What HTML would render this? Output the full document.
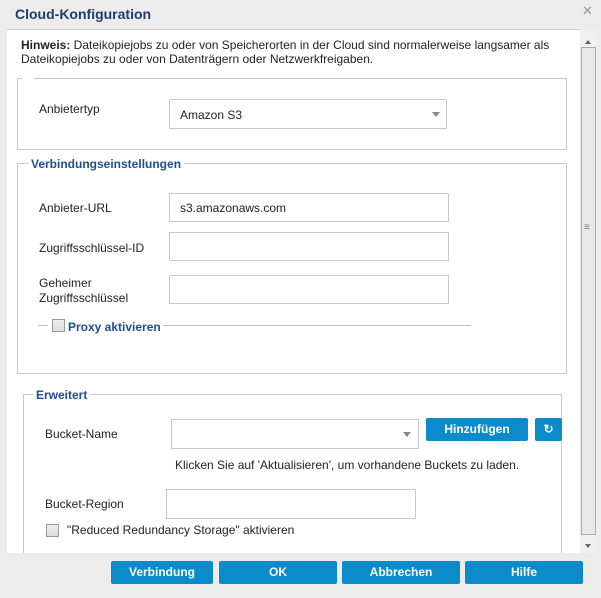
<!DOCTYPE html>
<html><head><meta charset="utf-8"><style>
*{box-sizing:border-box;margin:0;padding:0}
body{width:601px;height:598px;background:#ececec;font-family:"Liberation Sans",Arial,sans-serif;font-size:12px;color:#222;position:relative;overflow:hidden}
.a{position:absolute}
.title{left:15px;top:6px;font-size:14px;font-weight:bold;color:#1e3c6e}
.content{left:7px;top:29px;width:573px;height:524px;background:#fff;border-top:1px solid #d0d0d0}
.fs{border:1px solid #c6c8d2}
.lg{background:#fff;padding:0 3px;font-weight:bold;color:#1f4e8c}
.inp{border:1px solid #c8c8c8;background:#fff}
.btn{background:#0b8bc9;color:#fff;font-weight:bold;text-align:center;line-height:23px;height:23px;border-radius:2px}
.cb{width:13px;height:13px;border:1px solid #999;background:linear-gradient(#eee,#ddd)}
.arr{width:0;height:0;border-left:4px solid transparent;border-right:4px solid transparent;border-top:5px solid #888}
</style></head><body>
<div class="a title">Cloud-Konfiguration</div>
<div class="a" style="left:582px;top:3px;color:#999;font-size:13px">✕</div>
<div class="a content"></div>
<div class="a" style="left:21px;top:38px;line-height:14px;width:560px"><b>Hinweis:</b> Dateikopiejobs zu oder von Speicherorten in der Cloud sind normalerweise langsamer als Dateikopiejobs zu oder von Datenträgern oder Netzwerkfreigaben.</div>

<div class="a fs" style="left:17px;top:78px;width:550px;height:72px"></div>
<div class="a" style="left:22px;top:76px;width:12px;height:4px;background:#fff"></div>
<div class="a" style="left:39px;top:102px">Anbietertyp</div>
<div class="a inp" style="left:169px;top:99px;width:278px;height:30px"></div>
<div class="a" style="left:180px;top:108px">Amazon S3</div>
<div class="a arr" style="left:432px;top:112px"></div>

<div class="a fs" style="left:17px;top:163px;width:550px;height:211px"></div>
<div class="a lg" style="left:28px;top:157px">Verbindungseinstellungen</div>
<div class="a" style="left:39px;top:201px">Anbieter-URL</div>
<div class="a inp" style="left:169px;top:193px;width:280px;height:29px"></div>
<div class="a" style="left:180px;top:201px">s3.amazonaws.com</div>
<div class="a" style="left:39px;top:241px">Zugriffsschlüssel-ID</div>
<div class="a inp" style="left:169px;top:232px;width:280px;height:29px"></div>
<div class="a" style="left:39px;top:276px;line-height:15px">Geheimer<br>Zugriffsschlüssel</div>
<div class="a inp" style="left:169px;top:275px;width:280px;height:29px"></div>
<div class="a" style="left:38px;top:325px;width:433px;height:1px;background:#b8bcc8"></div>
<div class="a" style="left:48px;top:318px;width:115px;height:16px;background:#fff"></div>
<div class="a cb" style="left:52px;top:319px"></div>
<div class="a" style="left:68px;top:320px;font-weight:bold;color:#1f4e8c">Proxy aktivieren</div>

<div class="a fs" style="left:23px;top:394px;width:539px;height:170px"></div>
<div class="a lg" style="left:33px;top:388px">Erweitert</div>
<div class="a" style="left:45px;top:427px">Bucket-Name</div>
<div class="a inp" style="left:171px;top:419px;width:248px;height:30px"></div>
<div class="a arr" style="left:403px;top:432px"></div>
<div class="a btn" style="left:426px;top:418px;width:102px">Hinzufügen</div>
<div class="a btn" style="left:535px;top:418px;width:27px">↻</div>
<div class="a" style="left:175px;top:458px">Klicken Sie auf 'Aktualisieren', um vorhandene Buckets zu laden.</div>
<div class="a" style="left:45px;top:497px">Bucket-Region</div>
<div class="a inp" style="left:166px;top:489px;width:250px;height:30px"></div>
<div class="a cb" style="left:46px;top:524px"></div>
<div class="a" style="left:67px;top:523px">"Reduced Redundancy Storage" aktivieren</div>

<div class="a" style="left:0;top:553px;width:601px;height:45px;background:#ececec"></div>
<div class="a btn" style="left:111px;top:561px;width:102px">Verbindung</div>
<div class="a btn" style="left:219px;top:561px;width:118px">OK</div>
<div class="a btn" style="left:342px;top:561px;width:118px">Abbrechen</div>
<div class="a btn" style="left:465px;top:561px;width:118px">Hilfe</div>

<div class="a" style="left:580px;top:30px;width:17px;height:523px;background:#f0f0f0"></div>
<div class="a" style="left:581px;top:47px;width:15px;height:488px;background:#e8e8e8;border:1px solid #aaa"></div>
<div class="a" style="left:584px;top:222px;color:#777;font-size:10px">≡</div>
<div class="a" style="left:585px;top:40px;border-left:3px solid transparent;border-right:3px solid transparent;border-bottom:4px solid #666"></div>
<div class="a" style="left:585px;top:544px;border-left:3px solid transparent;border-right:3px solid transparent;border-top:4px solid #666"></div>
</body></html>
